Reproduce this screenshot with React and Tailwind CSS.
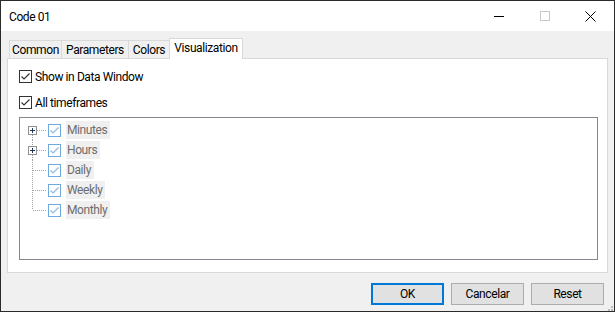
import React from "react";

const font = { fontFamily: 'Roboto, "Noto Sans", sans-serif' };

function Check({ muted = false }) {
  return (
    <span
      className={
        "flex h-[13px] w-[13px] shrink-0 items-center justify-center border bg-white " +
        (muted ? "border-[#70a9dc]" : "border-[#333333]")
      }
    >
      <svg width="11" height="11" viewBox="0 0 11 11">
        <path
          d="M1.5 5.5 L4 8 L9.5 2.5"
          fill="none"
          stroke={muted ? "#8fb9e3" : "#333333"}
          strokeWidth="1.2"
        />
      </svg>
    </span>
  );
}

// connector cell of the tree: dotted lines + optional expander box
function Lines({ kind }) {
  const dot = { stroke: "#a0a0a0", strokeWidth: 1, strokeDasharray: "1 1", fill: "none" };
  const hasBox = kind === "first" || kind === "mid-box";
  return (
    <svg width="28" height="20" viewBox="0 0 28 20" className="shrink-0">
      {kind === "first" && <line x1="12.5" y1="15" x2="12.5" y2="20" style={dot} />}
      {kind === "mid-box" && (
        <>
          <line x1="12.5" y1="0" x2="12.5" y2="6" style={dot} />
          <line x1="12.5" y1="15" x2="12.5" y2="20" style={dot} />
        </>
      )}
      {kind === "mid" && <line x1="12.5" y1="0" x2="12.5" y2="20" style={dot} />}
      {kind === "last" && <line x1="12.5" y1="0" x2="12.5" y2="10" style={dot} />}
      <line x1={hasBox ? 17 : 13} y1="10.5" x2="27" y2="10.5" style={dot} />
      {hasBox && (
        <>
          <rect x="8.5" y="6.5" width="8" height="8" fill="#ffffff" stroke="#919191" />
          <line x1="10" y1="10.5" x2="15" y2="10.5" stroke="#1e395b" />
          <line x1="12.5" y1="8" x2="12.5" y2="13" stroke="#1e395b" />
        </>
      )}
    </svg>
  );
}

const rows = [
  { label: "Minutes", kind: "first" },
  { label: "Hours", kind: "mid-box" },
  { label: "Daily", kind: "mid" },
  { label: "Weekly", kind: "mid" },
  { label: "Monthly", kind: "last" },
];

const tabs = [
  { label: "Common", w: "w-[53px]" },
  { label: "Parameters", w: "w-[68px]" },
  { label: "Colors", w: "w-[42px]" },
];

export default function App() {
  return (
    <div
      className="flex h-[312px] w-[615px] flex-col border border-[#2b2b2b] bg-[#f0f0f0] text-[12px] tracking-[-0.4px] text-black"
      style={font}
    >
      {/* title bar */}
      <div className="flex h-[30px] shrink-0 items-center bg-white pl-[8px]">
        <span className="flex-1 pt-[1px] text-[12px]">Code 01</span>
        <div className="flex items-center">
          <span className="flex w-[46px] justify-center">
            <span className="h-[1px] w-[10px] bg-black" />
          </span>
          <span className="flex w-[46px] justify-center">
            <span className="h-[10px] w-[10px] border border-[#c8c8c8]" />
          </span>
          <span className="flex w-[46px] justify-center pr-[2px]">
            <svg width="11" height="11" viewBox="0 0 11 11">
              <path d="M0.5 0.5 L10.5 10.5 M10.5 0.5 L0.5 10.5" stroke="#000" strokeWidth="1" />
            </svg>
          </span>
        </div>
      </div>

      {/* body */}
      <div className="flex flex-1 flex-col px-[6px] pt-[7px]">
        {/* tab strip */}
        <div className="flex h-[20px] items-end pl-[2px]">
          {tabs.map((t) => (
            <div
              key={t.label}
              className={
                t.w +
                " -mr-[1px] flex h-[18px] items-center justify-center border border-b-0 border-[#d9d9d9] bg-[#f0f0f0] leading-none"
              }
            >
              {t.label}
            </div>
          ))}
          <div className="relative z-10 -mb-[1px] flex h-[21px] w-[74px] items-start justify-center border border-b-0 border-[#d9d9d9] bg-white pt-[2px] leading-[14px]">
            Visualization
          </div>
        </div>

        {/* tab page */}
        <div className="flex h-[215px] flex-col border border-[#d9d9d9] bg-white pl-[11px] pr-[9px] pt-[11px]">
          <label className="flex h-[13px] items-center gap-[3px]">
            <Check />
            <span className="leading-none">Show in Data Window</span>
          </label>
          <label className="mt-[13px] flex h-[13px] items-center gap-[3px]">
            <Check />
            <span className="leading-none">All timeframes</span>
          </label>

          <div className="mt-[8px] flex h-[143px] flex-col border border-[#828790] bg-white pt-[2px]">
            {rows.map((r) => (
              <div key={r.label} className="flex h-[20px] items-center">
                <Lines kind={r.kind} />
                <Check muted />
                <span className="ml-[5px] flex h-[18px] items-center bg-[#f0f0f0] px-[1px] pr-[3px] text-[#6d6d6d]">
                  {r.label}
                </span>
              </div>
            ))}
          </div>
        </div>

        {/* buttons */}
        <div className="mt-[10px] flex items-start justify-end gap-[7px] pr-[4px]">
          <button className="flex h-[22px] w-[73px] items-center justify-center border-2 border-[#0078d7] bg-[#e1e1e1]">
            OK
          </button>
          <button className="flex h-[22px] w-[73px] items-center justify-center border border-[#adadad] bg-[#e1e1e1]">
            Cancelar
          </button>
          <button className="flex h-[22px] w-[73px] items-center justify-center border border-[#adadad] bg-[#e1e1e1]">
            Reset
          </button>
        </div>
        <div className="-mr-[5px] mt-auto flex justify-end pb-[1px]">
          <svg width="9" height="9" viewBox="0 0 9 9">
            {[
              [7, 1], [7, 4], [4, 4], [7, 7], [4, 7], [1, 7],
            ].map(([x, y]) => (
              <rect key={x + "-" + y} x={x} y={y} width="2" height="2" fill="#bcbcbc" />
            ))}
          </svg>
        </div>
      </div>
    </div>
  );
}
